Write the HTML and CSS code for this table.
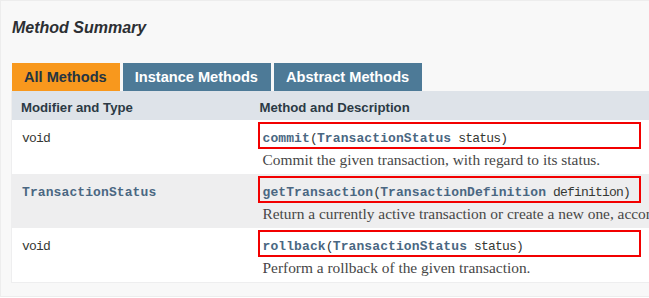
FILE: index.html
```html
<!DOCTYPE html>
<html>
<head>
<meta charset="utf-8">
<link rel="stylesheet" href="styles.css">
</head>
<body>
<div class="panel">
  <h3 class="title">Method Summary</h3>
  <div class="tabs">
    <span class="tab active">All Methods</span>
    <span class="tab">Instance Methods</span>
    <span class="tab">Abstract Methods</span>
  </div>
  <table class="summary">
    <colgroup><col class="c-first"><col class="c-last"></colgroup>
    <thead>
      <tr><th>Modifier and Type</th><th>Method and Description</th></tr>
    </thead>
    <tbody>
      <tr class="alt">
        <td class="col-first"><code class="code">void</code></td>
        <td class="col-last">
          <div class="sig"><code class="code"><b class="link">commit</b>(<b class="link">TransactionStatus</b>&nbsp;status)</code></div>
          <div class="block">Commit the given transaction, with regard to its status.</div>
        </td>
      </tr>
      <tr class="row">
        <td class="col-first"><code class="code"><b class="link">TransactionStatus</b></code></td>
        <td class="col-last">
          <div class="sig"><code class="code"><b class="link">getTransaction</b>(<b class="link">TransactionDefinition</b>&nbsp;definition)</code></div>
          <div class="block">Return a currently active transaction or create a new one, according to the specified propagation behavior.</div>
        </td>
      </tr>
      <tr class="alt">
        <td class="col-first"><code class="code">void</code></td>
        <td class="col-last">
          <div class="sig"><code class="code"><b class="link">rollback</b>(<b class="link">TransactionStatus</b>&nbsp;status)</code></div>
          <div class="block">Perform a rollback of the given transaction.</div>
        </td>
      </tr>
    </tbody>
  </table>
</div>
</body>
</html>
```
FILE: styles.css
```css
html, body {
  margin: 0;
  padding: 0;
  background: #ffffff;
  overflow: hidden;
}
body {
  width: 649px;
  height: 298px;
  font-family: "Liberation Sans", Arial, sans-serif;
  color: #353833;
}
.panel {
  width: 900px;
  border: 1px solid #ededed;
  background: #f8f8f8;
  padding: 0 0 13px 10px;
}
.title {
  margin: 17px 0 0 1px;
  font-size: 16px;
  line-height: 20px;
  font-style: italic;
  font-weight: bold;
  color: #2c2f33;
}
.tabs {
  display: flex;
  gap: 3px;
  margin: 25px 0 0 1px;
}
.tab {
  display: block;
  height: 28px;
  line-height: 28px;
  padding: 0 13px 0 12px;
  font-size: 14.6px;
  font-weight: bold;
  color: #ffffff;
  background: #4d7a97;
  white-space: nowrap;
}
.tab.active {
  background: #f8981d;
  color: #253441;
}
.summary {
  table-layout: fixed;
  border-collapse: collapse;
  border-left: 1px solid #eeeeef;
  border-bottom: 1px solid #eeeeef;
  width: 880px;
}
.c-first { width: 239px; }
.c-last { width: 641px; }
.summary th {
  background: #dee3e9;
  text-align: left;
  font-size: 13.2px;
  font-weight: bold;
  line-height: 18px;
  padding: 8px 3px 3px 9px;
  color: #2c3a45;
  white-space: nowrap;
}
.summary td {
  vertical-align: top;
  padding: 0;
  overflow: hidden;
}
.summary td.col-first {
  padding: 7px 3px 0 10px;
  line-height: 20px;
}
.summary td.col-last {
  padding: 2px 3px 4px 7px;
}
.alt td { background: #ffffff; }
.row td { background: #eeeeef; }
.code {
  font-family: "Liberation Mono", "DejaVu Sans Mono", monospace;
  font-size: 13px;
  letter-spacing: -0.8px;
  color: #353833;
  white-space: nowrap;
}
.link {
  color: #4a6782;
  font-weight: bold;
  letter-spacing: 0.1px;
}
.sig {
  width: 376px;
  border: 2px solid #f20000;
  padding: 3px 0 0 3px;
  height: 20px;
  line-height: 20px;
}
.block {
  margin: 1px 0 0 5px;
  font-family: "Liberation Serif", "Times New Roman", serif;
  font-size: 15.4px;
  line-height: 20px;
  color: #474747;
  white-space: nowrap;
}
```
